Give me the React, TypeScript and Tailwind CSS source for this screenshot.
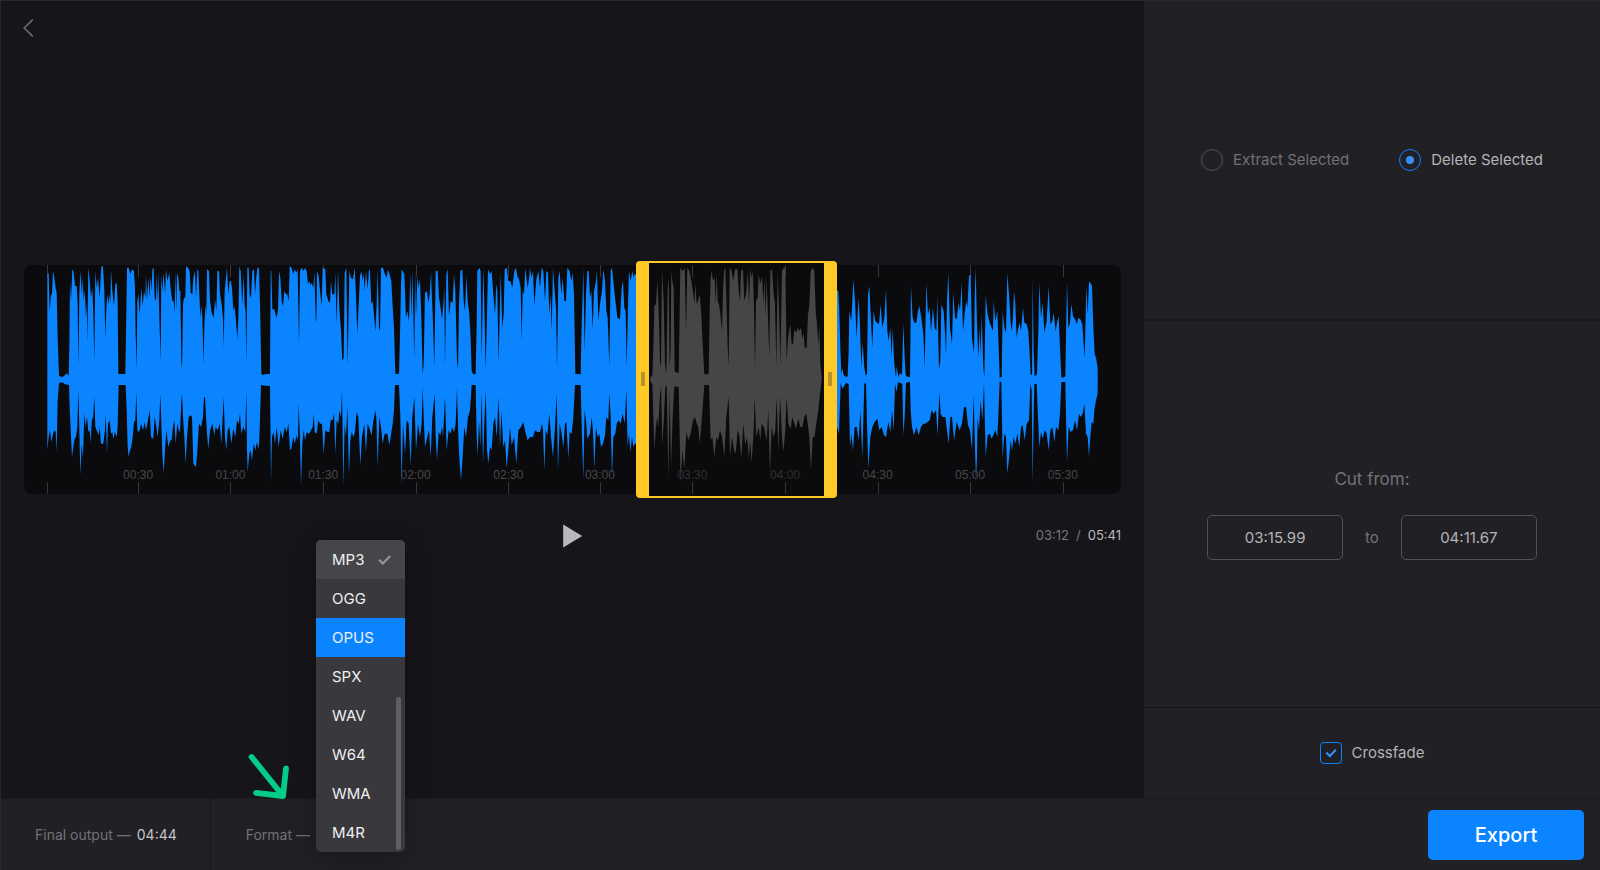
import { useState } from "react";

interface WaveSection {
  offset: number;
  className: string;
  upper: string;
  lower: string;
}

const FORMATS = ["MP3", "OGG", "OPUS", "SPX", "WAV", "W64", "WMA", "M4R"];

// Ruler marks: x position as a share of the track width, and the caption
const MARKS = [
  { at: 2.1, label: "" },
  { at: 10.4, label: "00:30" },
  { at: 18.82, label: "01:00" },
  { at: 27.27, label: "01:30" },
  { at: 35.7, label: "02:00" },
  { at: 44.15, label: "02:30" },
  { at: 52.5, label: "03:00" },
  { at: 60.93, label: "03:30", dim: true },
  { at: 69.37, label: "04:00", dim: true },
  { at: 77.81, label: "04:30" },
  { at: 86.24, label: "05:00" },
  { at: 94.7, label: "05:30" },
];

// Envelope points, zero line at y = 386
const WAVE: WaveSection[] = [
  {
    offset: -72,
    className: "fill-[#0a84ff]",
    upper:
      "142,386 142,70 146,66 149,180 153,132 156,128 159,60 163,80 167,112 170,125 173,260 177,375 187,378 193,374 200,367 206,374 208,290 210,90 213,150 217,55 221,62 225,105 230,105 233,160 235,345 238,130 241,60 246,130 248,75 251,150 254,115 258,200 260,150 262,270 265,50 269,85 273,140 277,110 280,190 283,330 286,60 290,110 294,80 299,140 303,60 305,46 309,46 313,120 316,260 319,170 322,130 325,160 329,130 331,160 333,55 337,120 342,165 346,100 350,95 353,150 355,369 376,369 379,180 381,50 386,50 391,70 396,55 402,60 405,110 407,250 410,355 412,150 415,130 419,190 424,110 428,165 432,120 436,140 438,70 441,150 445,80 449,140 451,75 455,120 457,55 461,50 464,140 468,150 470,65 473,150 475,60 478,200 482,330 484,70 487,120 491,65 495,130 498,55 502,90 508,65 512,115 517,150 521,150 524,185 526,60 529,180 531,65 535,80 538,120 541,120 544,330 546,355 549,160 552,140 556,140 558,46 564,50 569,60 572,125 577,130 580,80 585,60 588,140 592,55 595,60 598,130 601,200 604,165 607,200 611,340 613,220 617,160 619,190 621,55 627,60 630,150 635,185 641,200 645,145 649,180 652,60 657,60 660,130 665,160 669,200 671,290 674,120 677,90 681,50 685,130 689,90 693,90 696,110 700,180 704,165 708,210 712,265 715,200 718,46 722,60 727,160 731,70 734,165 737,180 739,340 742,50 746,50 749,130 753,140 757,60 762,55 765,130 769,75 773,50 777,50 780,160 784,369 790,372 797,369 804,369 810,368 812,60 814,60 817,175 823,175 829,200 834,180 837,60 841,80 845,150 849,165 853,120 858,130 862,130 866,150 869,46 875,50 880,70 884,55 889,65 893,55 897,280 900,60 905,50 911,60 915,50 920,60 924,100 928,90 931,100 931,386",
    lower:
      "142,386 142,600 146,560 150,540 154,575 159,550 164,540 167,545 170,605 173,450 177,398 187,396 195,402 207,404 209,470 213,560 216,620 220,590 224,565 228,560 232,530 235,420 238,540 241,675 245,580 249,625 253,490 257,530 261,500 265,545 269,540 272,578 276,500 279,510 283,440 286,530 292,545 296,555 299,530 303,580 310,580 315,540 317,490 321,610 324,520 329,510 333,550 337,545 340,565 345,545 350,560 353,530 356,404 377,404 380,480 383,590 386,620 390,600 394,590 398,560 402,515 406,510 409,425 412,540 418,545 423,520 429,540 434,515 438,540 444,510 449,480 453,560 460,565 464,500 469,530 473,560 478,510 481,430 484,520 487,610 491,668 495,600 499,540 505,590 511,570 515,570 519,530 523,510 527,580 532,520 536,540 540,545 544,450 546,430 549,500 553,560 557,640 561,560 566,500 572,495 576,500 580,640 588,650 592,600 597,520 603,530 609,500 612,440 615,440 618,500 621,550 625,595 630,540 637,520 643,555 647,530 653,540 659,520 664,580 668,500 671,440 675,560 679,600 683,540 688,530 694,580 700,535 706,560 711,510 716,520 720,490 724,550 730,530 736,545 739,420 741,600 743,665 748,610 752,600 756,630 761,580 766,600 771,575 776,598 779,540 783,404 797,406 810,407 813,695 816,560 821,545 825,580 830,530 836,590 842,540 848,565 854,530 860,545 865,520 870,600 874,595 880,560 884,580 890,555 894,570 896,460 900,570 903,708 907,580 911,540 915,570 920,545 926,550 931,545 931,386",
  },
  {
    offset: 858,
    className: "fill-[#0a84ff]",
    upper:
      "0,386 0,105 5,95 10,110 13,60 17,200 19,215 21,60 26,75 31,130 35,165 38,50 46,55 49,130 55,150 60,155 63,90 67,130 73,130 76,65 80,220 84,55 88,170 93,240 97,330 101,320 104,65 109,50 113,345 118,60 123,80 129,85 134,50 137,110 142,250 146,160 150,75 154,60 158,90 161,65 164,120 168,60 173,115 177,55 180,60 184,160 188,150 192,190 196,240 200,160 203,55 207,230 210,240 213,50 219,50 225,70 230,80 234,55 240,75 244,90 247,150 252,230 256,369 267,368 270,250 273,100 275,55 283,70 288,200 292,180 297,210 301,65 304,200 307,60 310,190 313,325 315,60 318,200 322,75 326,110 330,85 334,200 338,369 341,340 345,125 351,120 355,155 359,130 363,65 368,190 373,345 377,60 383,60 387,140 391,165 396,205 400,160 403,110 405,345 409,70 413,55 417,195 422,150 428,155 432,70 436,120 441,330 444,355 447,160 451,60 457,55 461,150 465,180 469,75 473,150 477,180 481,240 485,360 490,370 497,369 500,220 502,60 508,50 512,60 515,320 518,150 520,50 523,160 527,355 531,190 534,55 540,70 545,60 550,130 555,190 559,100 562,120 566,340 569,190 572,65 577,230 581,190 584,55 590,50 595,90 601,90 607,110 613,60 618,50 622,75 627,85 632,110 635,270 638,120 642,130 646,50 653,110 657,85 660,50 664,80 669,60 673,165 679,85 685,60 690,110 695,50 700,60 705,150 709,60 714,65 718,190 722,130 725,240 729,50 734,120 738,170 741,350 745,80 749,60 754,130 758,80 763,150 768,150 772,50 779,60 784,90 788,65 792,130 796,369 812,370 815,220 818,130 820,50 824,300 828,130 832,60 836,60 840,140 844,120 848,235 852,120 858,90 861,60 865,210 870,160 876,120 880,55 885,90 889,180 893,200 898,345 902,60 906,50 910,90 914,130 918,165 922,200 930,205 935,110 939,90 943,170 947,180 950,350 954,160 957,60 962,90 967,60 971,80 974,70 980,70 980,386",
    lower:
      "0,386 0,545 8,530 11,490 14,545 20,550 25,510 30,520 36,520 41,612 46,540 53,545 58,545 62,510 68,510 72,490 76,610 80,510 85,520 88,480 93,500 96,420 100,710 104,520 108,560 112,470 117,672 121,570 125,545 130,560 135,545 140,485 145,500 151,645 156,560 163,520 168,605 173,520 180,540 185,555 189,520 196,480 199,500 203,648 208,500 213,530 218,580 224,550 232,550 238,585 242,560 248,520 252,480 255,404 267,404 271,500 275,704 279,520 285,610 290,510 296,520 302,645 307,500 313,440 318,600 324,520 330,560 335,520 338,410 341,500 345,590 352,560 357,540 362,620 367,500 374,430 377,560 381,630 386,545 391,555 396,530 399,560 405,440 410,600 416,540 422,550 426,530 432,545 437,520 441,415 445,560 449,640 453,690 458,620 463,530 468,560 474,500 480,480 485,404 497,404 500,560 503,615 507,510 511,590 515,430 519,640 523,520 527,420 531,600 535,640 540,590 545,600 550,520 555,500 560,560 566,440 570,590 574,485 580,590 585,570 590,655 595,600 600,530 605,585 612,560 619,640 625,540 633,530 640,515 646,545 653,570 660,560 669,560 675,540 682,545 690,545 696,520 699,540 703,660 707,540 712,555 718,490 723,560 729,620 735,530 740,430 744,660 749,520 754,545 760,590 765,520 769,515 775,625 779,545 785,550 790,500 795,404 812,404 816,560 820,685 824,480 828,510 832,565 840,550 845,500 849,545 853,655 858,530 863,560 868,550 873,590 879,580 885,555 889,500 895,510 898,430 902,500 906,680 910,560 916,550 920,520 926,510 932,520 938,490 944,520 949,420 953,590 957,550 961,605 966,560 970,590 974,580 980,580 980,386",
  },
  {
    offset: 1788,
    className: "fill-[#464648]",
    upper:
      "90,386 92,378 97,372 100,290 103,165 108,160 112,85 116,180 120,330 123,350 126,55 131,150 135,340 139,370 143,110 146,80 149,345 152,300 154,60 157,90 161,110 164,362 176,366 179,180 181,50 188,60 194,50 198,245 202,50 208,60 214,90 220,130 223,160 226,100 230,160 234,150 239,130 244,190 248,280 253,370 266,370 269,180 272,80 275,60 279,90 284,80 287,160 290,65 293,150 297,160 301,190 306,240 309,120 312,60 316,50 319,140 323,290 326,345 329,50 335,60 340,90 345,55 352,55 357,130 360,150 363,60 369,55 373,150 378,130 384,60 387,165 391,55 395,80 398,60 401,130 405,350 408,150 413,140 416,70 421,100 426,75 430,160 433,80 437,190 440,80 444,200 448,320 451,60 456,55 461,130 465,160 469,345 473,60 477,170 481,345 486,60 491,50 496,50 500,330 504,265 508,235 511,220 515,280 519,280 523,235 528,245 533,230 538,240 543,230 547,265 551,245 554,290 560,290 564,190 568,165 572,60 578,50 583,60 587,180 591,220 595,280 598,220 601,340 605,378 605,386",
    lower:
      "90,386 92,395 97,400 103,600 107,540 111,500 115,530 120,430 123,410 127,585 132,500 136,410 140,405 145,685 149,420 153,652 158,500 163,408 176,410 180,600 182,700 187,600 193,655 199,545 205,570 213,545 219,510 225,500 230,520 235,530 239,580 243,540 248,470 253,404 267,404 272,570 277,560 283,620 289,560 294,570 300,540 306,560 313,620 319,500 326,440 330,620 336,560 342,600 347,610 353,540 358,555 364,625 370,520 376,585 381,560 387,625 390,570 395,636 401,540 404,440 409,560 416,530 421,570 425,520 432,530 440,570 445,480 450,670 455,530 461,560 466,540 470,440 475,600 480,440 486,560 490,605 496,540 500,440 505,520 512,535 517,500 523,520 528,535 535,505 541,530 547,530 553,500 559,490 563,520 568,560 573,660 578,560 583,560 589,520 595,480 600,430 605,390 605,386",
  },
  {
    offset: 2418,
    className: "fill-[#0a84ff]",
    upper:
      "17,386 17,115 25,120 28,180 31,290 34,370 37,352 41,372 48,378 53,376 56,300 58,180 64,210 70,85 75,150 80,260 85,140 89,200 94,350 98,275 103,350 107,373 111,370 114,130 118,105 122,190 127,290 131,180 136,210 141,215 147,220 152,160 157,230 163,200 168,115 172,240 176,270 181,230 185,320 188,230 193,340 198,380 200,345 205,378 210,366 216,372 220,217 224,320 227,372 232,377 240,378 243,105 248,200 253,215 259,215 264,180 268,165 274,200 280,250 284,350 289,95 294,190 299,170 303,240 309,170 314,230 319,240 322,135 327,355 331,330 334,160 341,180 346,260 348,310 351,150 355,65 360,230 366,280 370,125 375,200 380,205 386,155 390,180 395,95 399,240 405,180 409,150 412,170 417,75 422,70 426,260 432,310 434,140 437,50 441,220 445,320 449,230 452,310 455,190 460,350 463,380 467,135 473,190 479,215 485,230 489,240 491,150 496,210 502,180 506,290 509,380 515,378 518,180 523,230 528,245 532,65 537,130 542,215 545,240 549,200 552,120 556,160 560,260 565,230 569,215 573,240 579,170 583,215 590,220 595,240 599,310 602,372 606,370 608,85 611,300 614,376 621,370 625,240 628,95 633,200 638,155 643,245 650,210 656,105 661,220 667,210 671,185 677,240 682,210 686,195 690,290 694,378 700,380 706,376 709,200 711,92 715,230 720,215 724,160 729,195 735,205 741,220 745,200 751,205 757,220 761,280 764,320 769,105 773,190 777,92 781,95 786,105 790,230 794,310 798,320 803,350 803,386",
    lower:
      "803,386 803,430 798,450 793,480 790,520 785,515 781,560 777,620 773,560 768,550 763,460 758,490 752,500 747,490 741,540 735,510 729,540 722,545 716,530 711,636 708,500 706,395 694,395 690,490 685,540 678,530 673,575 667,530 661,540 656,600 650,550 644,540 638,565 633,545 628,590 624,500 620,400 613,402 611,500 608,700 605,420 601,402 597,510 590,520 584,570 578,525 573,530 568,590 562,550 556,580 551,560 546,600 542,570 537,625 532,670 528,560 523,550 518,625 514,395 509,393 505,500 502,560 496,540 490,555 485,565 479,550 473,555 467,620 462,400 457,510 452,450 447,540 443,500 441,620 438,690 434,560 431,435 426,600 420,540 414,525 408,470 402,470 396,520 389,540 380,515 372,570 366,500 361,500 356,580 351,540 346,500 338,500 332,490 328,425 323,555 318,480 311,490 305,480 299,510 292,515 286,520 280,520 273,530 266,555 259,530 252,555 246,530 242,480 240,395 228,397 224,500 220,555 217,400 210,398 204,395 200,425 195,400 191,540 186,480 181,545 175,515 168,560 162,555 155,530 148,540 142,505 134,515 127,530 121,560 115,655 111,520 108,400 103,398 97,620 91,480 86,570 80,530 74,530 69,600 64,550 60,590 56,400 48,398 37,415 32,398 27,550 17,515 17,386",
  },
];

const radioClass =
  "grid size-[22px] appearance-none place-content-center rounded-full border border-[#525256] checked:border-[#0a84ff] checked:before:size-2 checked:before:rounded-full checked:before:bg-[#3392ff]";
const timeInputClass =
  "h-[45px] w-[136px] rounded-[5px] border border-[#515155] bg-transparent text-center text-[15px] text-[#b4b4b6] outline-none focus:border-[#0a84ff]";

function Track() {
  return (
    <div className="relative h-[229px] rounded-lg bg-[#0b0b0d]">
      <div className="absolute -inset-y-1 left-[55.75%] w-[18.35%] rounded-[4px] bg-[#0b0b0d]" />
      {MARKS.map(mark => (
        <div
          key={mark.at}
          className="absolute inset-y-0 flex w-px flex-col justify-between"
          style={{ left: `${mark.at}%` }}
        >
          <span className="h-3 bg-[#363638]" />
          <span className="h-3 bg-[#363638]" />
        </div>
      ))}
      <svg viewBox="0 0 3291 687" preserveAspectRatio="none" className="absolute inset-0 size-full" aria-hidden="true">
        {WAVE.map(section => (
          <g key={section.offset} transform={`translate(${section.offset} -42)`} className={section.className}>
            <polygon points={section.upper} />
            {/* overlap the halves a little so no seam shows on the zero line */}
            <polygon points={section.lower} transform="translate(0 -2)" />
          </g>
        ))}
      </svg>
      {MARKS.filter(mark => mark.label).map(mark => (
        <span
          key={mark.label}
          className={`absolute bottom-[11px] -translate-x-1/2 font-['Liberation_Sans',sans-serif] text-xs leading-4 ${mark.dim ? "text-[#303032]" : "text-[#48484a]"}`}
          style={{ left: `${mark.at}%` }}
        >
          {mark.label}
        </span>
      ))}
      <div className="absolute -inset-y-1 left-[55.75%] flex w-[18.35%] items-center justify-between rounded-[4px] border-x-[13px] border-y-2 border-[#ffc928]">
        <span className="-ml-2 h-[14px] w-1 bg-[#b8932a]" />
        <span className="-mr-2 h-[14px] w-1 bg-[#b8932a]" />
      </div>
    </div>
  );
}

function FormatMenu({ value, onChange }: { value: string; onChange: (format: string) => void }) {
  return (
    <div
      role="listbox"
      aria-label="Format"
      className="absolute bottom-[18px] left-0 z-10 w-[89px] overflow-hidden rounded-[5px] bg-[#39383d] shadow-[0_4px_28px_rgba(0,0,0,0.3)]"
    >
      {FORMATS.map(format => (
        <button
          key={format}
          type="button"
          role="option"
          aria-selected={format === value}
          onClick={() => onChange(format)}
          className={`flex h-[39px] w-full items-center justify-between pr-[14px] pl-4 text-[15px] text-[#f0f0f1] ${format === "OPUS" ? "bg-[#0a84ff]" : format === value ? "bg-[#464549]" : "hover:bg-[#464549]"}`}
        >
          {format}
          {format === value && (
            <svg viewBox="0 0 13 10" className="w-[13px]" fill="none" stroke="#949496" strokeWidth="2.2">
              <path d="M1 4.8 4.8 8.6 12.2 1" />
            </svg>
          )}
        </button>
      ))}
      <span className="absolute right-1 bottom-[2px] h-[153px] w-[5px] rounded-full bg-[#5f5e62]" />
    </div>
  );
}

export default function App() {
  const [format, setFormat] = useState("MP3");
  const [mode, setMode] = useState("delete");
  const [from, setFrom] = useState("03:15.99");
  const [to, setTo] = useState("04:11.67");
  const [crossfade, setCrossfade] = useState(true);

  return (
    <div className="flex min-h-screen flex-col border-t border-l border-[#262833] bg-[#16151a] font-['Inter',sans-serif]">
      <div className="flex flex-1">
        <main className="flex min-w-0 flex-1 flex-col px-[23px]">
          <header className="flex h-[43px] items-end">
            <button type="button" aria-label="Back" className="pb-[7px]">
              <svg viewBox="0 0 10 18" className="h-[18px] w-[10px] overflow-visible" fill="none" stroke="#6c6c70" strokeWidth="1.6">
                <path d="M8.8 .6 .2 9l8.6 8.4" />
              </svg>
            </button>
          </header>
          <div className="flex flex-1 flex-col justify-center">
            <Track />
            <div className="grid h-[84px] grid-cols-3 items-center">
              <button type="button" aria-label="Play" className="col-start-2 justify-self-center">
                <svg viewBox="0 0 20 24" className="h-6 w-5 overflow-visible fill-[#b9b9bb]">
                  <path d="M1.2 .5 20.2 12 1.2 23.5z" />
                </svg>
              </button>
              <p className="flex gap-[7px] justify-self-end text-[13px] text-[#77777a]">
                <span>03:12</span>
                <span>/</span>
                <span className="text-[#b9b9bb]">05:41</span>
              </p>
            </div>
          </div>
        </main>

        <aside className="flex w-[456px] shrink-0 flex-col bg-[#212025] text-[15px] text-[#b4b4b6]">
          <div className="flex flex-14 items-center justify-center gap-[50px]">
            <label className={`flex items-center gap-[10px] ${mode === "extract" ? "" : "text-[#727275]"}`}>
              <input
                type="radio"
                name="mode"
                checked={mode === "extract"}
                onChange={() => setMode("extract")}
                className={radioClass}
              />
              Extract Selected
            </label>
            <label className={`flex items-center gap-[10px] ${mode === "delete" ? "" : "text-[#727275]"}`}>
              <input
                type="radio"
                name="mode"
                checked={mode === "delete"}
                onChange={() => setMode("delete")}
                className={radioClass}
              />
              Delete Selected
            </label>
          </div>
          <div className="flex flex-17 flex-col items-center justify-center gap-6 border-t-2 border-[#19181c] text-[#727275]">
            <label htmlFor="cut-from" className="text-[17px] leading-6">
              Cut from:
            </label>
            <div className="flex items-center gap-[22px]">
              <input id="cut-from" type="text" value={from} onChange={e => setFrom(e.target.value)} className={timeInputClass} />
              <label htmlFor="cut-to">to</label>
              <input id="cut-to" type="text" value={to} onChange={e => setTo(e.target.value)} className={timeInputClass} />
            </div>
          </div>
          <div className="flex h-[91px] items-center justify-center border-t border-[#151418]">
            <label className="flex items-center gap-[10px]">
              <span className="grid size-[22px]">
                <input
                  type="checkbox"
                  checked={crossfade}
                  onChange={e => setCrossfade(e.target.checked)}
                  className="col-start-1 row-start-1 appearance-none rounded-[4px] border border-[#525256] checked:border-[#0a84ff]"
                />
                {crossfade && (
                  <svg
                    viewBox="0 0 22 22"
                    className="pointer-events-none col-start-1 row-start-1"
                    fill="none"
                    stroke="#3392ff"
                    strokeWidth="2"
                  >
                    <path d="M6.3 10.6 9.9 14 15.8 7.8" />
                  </svg>
                )}
              </span>
              Crossfade
            </label>
          </div>
        </aside>
      </div>

      <footer className="flex h-[72px] items-stretch border-t border-[#19181c] bg-[#212025] pr-4 text-sm text-[#727275]">
        <p className="flex items-center gap-[6px] border-r border-[#19181c] pr-[33px] pl-[34px]">
          Final output — <span className="text-[#c4c4c6]">04:44</span>
        </p>
        <div className="relative flex items-center gap-[6px] pl-[35px]">
          <span>Format —</span>
          <div className="relative self-stretch">
            <FormatMenu value={format} onChange={setFormat} />
          </div>
          <svg
            viewBox="0 0 42 46"
            className="absolute bottom-full left-[37px] h-[46px] w-[42px]"
            fill="none"
            stroke="#06cc8a"
            strokeWidth="5.8"
            strokeLinecap="round"
            strokeLinejoin="round"
            aria-hidden="true"
          >
            <path d="M3.6 4 35 43M38 15.5 35 43 8 39.8" />
          </svg>
        </div>
        <button
          type="button"
          className="ml-auto h-[50px] w-[156px] self-center rounded-[5px] bg-[#0a84ff] text-xl font-medium text-white"
        >
          Export
        </button>
      </footer>
    </div>
  );
}
